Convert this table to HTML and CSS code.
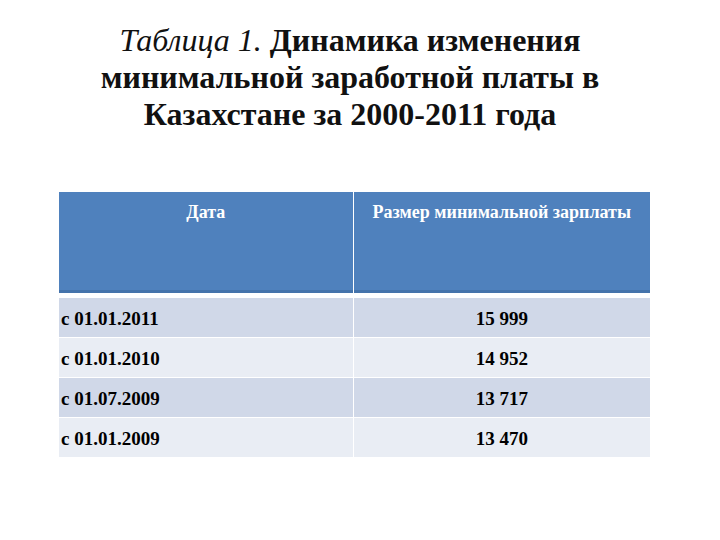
FILE: index.html
```html
<!DOCTYPE html>
<html lang="ru">
<head>
<meta charset="utf-8">
<link rel="stylesheet" href="styles.css">
</head>
<body>
<div class="slide">
  <h1 class="title"><span class="it">Таблица 1.</span> Динамика изменения минимальной заработной платы в Казахстане за 2000-2011 года</h1>
  <table class="tbl">
    <thead>
      <tr><th>Дата</th><th>Размер минимальной зарплаты</th></tr>
    </thead>
    <tbody>
      <tr class="odd"><td class="d">с 01.01.2011</td><td class="n">15 999</td></tr>
      <tr class="even"><td class="d">с 01.01.2010</td><td class="n">14 952</td></tr>
      <tr class="odd"><td class="d">с 01.07.2009</td><td class="n">13 717</td></tr>
      <tr class="even"><td class="d">с 01.01.2009</td><td class="n">13 470</td></tr>
    </tbody>
  </table>
</div>
</body>
</html>
```
FILE: styles.css
```css
html, body {
  margin: 0;
  padding: 0;
  background: #ffffff;
}
.slide {
  width: 720px;
  height: 540px;
  font-family: "Liberation Serif", "Times New Roman", serif;
  color: #000;
  padding-top: 22px;
  box-sizing: border-box;
}
.title {
  margin: 0 0 0 85px;
  width: 530px;
  text-align: center;
  font-size: 32px;
  line-height: 37px;
  font-weight: bold;
  color: #111;
}
.title .it {
  font-style: italic;
  font-weight: normal;
}
.tbl {
  margin: 59px 0 0 59px;
  width: 591px;
  border-collapse: collapse;
}
.tbl th {
  background: #4f81bd;
  color: #fff;
  font-size: 18px;
  font-weight: bold;
  height: 103px;
  vertical-align: top;
  padding: 10px 0 0;
  box-sizing: border-box;
  border-right: 1px solid #fff;
  border-bottom: 5px solid #fff;
  box-shadow: inset 0 -3px 0 #4473ab;
}
.tbl th:first-child { width: 294px; }
.tbl th:last-child { border-right: none; }
.tbl td {
  font-size: 19px;
  font-weight: bold;
  height: 36px;
  padding: 3px 0 0;
  border-right: 1px solid #fff;
  border-bottom: 1px solid #fff;
}
.tbl td:last-child { border-right: none; }
.tbl tr.odd td { background: #d0d8e8; }
.tbl tr.even td { background: #e9edf4; }
.tbl td.d { padding-left: 2px; }
.tbl td.n { text-align: center; }
```
